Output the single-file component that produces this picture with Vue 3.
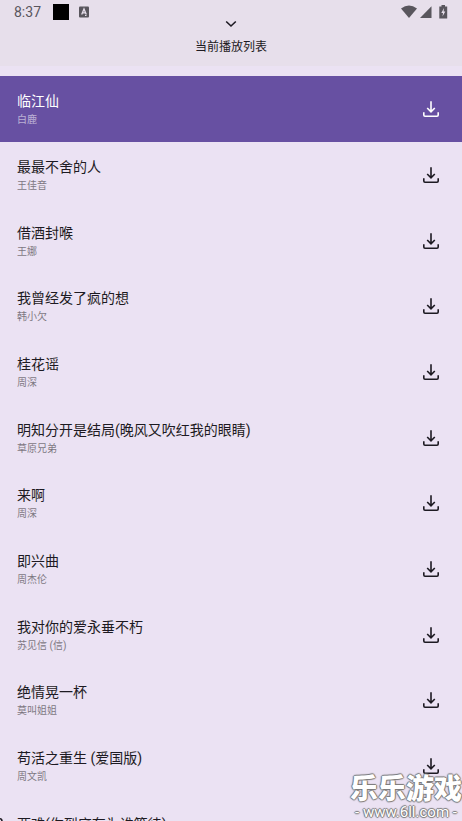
<script setup>
const songs = [
  { title: '临江仙', artist: '白鹿' },
  { title: '最最不舍的人', artist: '王佳音' },
  { title: '借酒封喉', artist: '王娜' },
  { title: '我曾经发了疯的想', artist: '韩小欠' },
  { title: '桂花谣', artist: '周深' },
  { title: '明知分开是结局(晚风又吹红我的眼睛)', artist: '草原兄弟' },
  { title: '来啊', artist: '周深' },
  { title: '即兴曲', artist: '周杰伦' },
  { title: '我对你的爱永垂不朽', artist: '苏见信 (信)' },
  { title: '绝情晃一杯', artist: '莫叫姐姐' },
  { title: '苟活之重生 (爱国版)', artist: '周文凯' },
  { title: '两难(你到底在为谁等待)', artist: '' },
]
</script>

<template>
  <main class="screen">
    <header class="top">
      <div class="status">
        <span class="clock">8:37</span>
        <span class="block"></span>
        <svg class="badge" viewBox="0 0 10 12" aria-hidden="true">
          <rect y="0.500" width="10" height="11" rx="1" fill="#59565d" />
          <path d="M2.700 8.500 5 3l2.300 5.500M3.500 6.800h3" fill="none" stroke="#e7dfeb" stroke-width="1.300" />
          <path d="M6 9.500h1.500" stroke="#e7dfeb" stroke-width="1" />
        </svg>
        <svg class="signals" viewBox="0 0 47 14" aria-hidden="true">
          <path d="M0 3.500Q8-2.500 16 3.500L8 13Z" fill="#59565d" />
          <path d="M19 13 30.500 1.200V13Z" fill="#59565d" />
          <path d="M38.300 1.500H40.500V0H44V1.500H46.200V13.500H38.300Z" fill="#59565d" />
          <path d="M43 3 40.300 8H42L41.500 11.500 44.300 6.500H42.600Z" fill="#e7dfeb" />
        </svg>
      </div>
      <button class="collapse" type="button" aria-label="收起">
        <svg viewBox="0 0 12 8" aria-hidden="true"><path d="M1.200 1.500 6 6l4.800-4.500" /></svg>
      </button>
      <h1>当前播放列表</h1>
    </header>

    <ul class="songs">
      <li v-for="(song, i) in songs" :key="song.title" class="song" :class="{ playing: i === 0 }">
        <div class="info">
          <span class="title">{{ song.title }}</span>
          <span class="artist">{{ song.artist }}</span>
        </div>
        <button class="download" type="button" :aria-label="'下载 ' + song.title">
          <svg viewBox="0 0 18 18" aria-hidden="true">
            <path d="M9 1.200v10.300M5.200 8 9 11.800 12.800 8M1.800 12.200v2.800q0 1.200 1.200 1.200h12q1.200 0 1.200-1.200v-2.800" />
          </svg>
        </button>
      </li>
    </ul>

    <aside class="mark">
      <strong>乐乐游戏</strong>
      <span>- www.6ll.com -</span>
    </aside>
    <svg class="speck" viewBox="0 0 3 3" aria-hidden="true"><path d="M0 .8q1.800 0 2 2.200" /></svg>
  </main>
</template>

<style>
body {
  background: #ebe2f3;
}
</style>

<style scoped>
.screen {
  position: relative;
  height: 100vh;
  overflow: hidden;
  background: #ebe2f3;
  color: #1d1a22;
  font-family: Roboto, "Noto Sans CJK SC", sans-serif;
}

.top {
  display: flex;
  flex-direction: column;
  align-items: center;
  height: 66px;
  margin-bottom: 10px;
  background: #e7dfeb;
}

.status {
  display: flex;
  align-items: center;
  align-self: stretch;
  height: 16px;
  padding: 4px 14px 0;
  color: #59565d;
}

.clock {
  width: 39px;
  font-size: 14px;
  line-height: 18px;
}

.block {
  width: 16px;
  height: 16px;
  margin-right: 10px;
  background: #000;
}

.badge {
  width: 10px;
  height: 12px;
}

.signals {
  width: 47px;
  height: 14px;
  margin-left: auto;
}

button {
  padding: 0;
  border: 0;
  background: none;
  color: inherit;
}

svg {
  display: block;
}

.collapse svg {
  width: 12px;
  height: 8px;
}

.collapse path,
.download path,
.speck path {
  fill: none;
  stroke: currentColor;
  stroke-width: 1.6;
}

h1 {
  margin: 9px 0 0;
  font-size: 12px;
  font-weight: 400;
  line-height: 20px;
}

.songs {
  display: grid;
  grid-template-rows: repeat(12, 1fr);
  height: 788px;
  margin: 0;
  padding: 0;
  list-style: none;
}

.song {
  display: flex;
  align-items: center;
  justify-content: space-between;
  padding: 1px 22px 0 17px;
}

.playing {
  background: #6750a2;
  color: #fff;
}

.info {
  display: flex;
  flex-direction: column;
}

.title {
  font-size: 14px;
  line-height: 22px;
}

.artist {
  min-height: 16px;
  font-size: 10px;
  line-height: 16px;
  opacity: 0.55;
}

.download svg {
  width: 18px;
  height: 18px;
}

.mark {
  position: absolute;
  right: 0;
  bottom: 0;
  display: flex;
  flex-direction: column;
  align-items: center;
  color: #fff;
  text-shadow: 1px 0 1px #777, -1px 0 1px #777, 0 1px 1px #777, 0 -1px 1px #777;
}

.mark strong {
  font-size: 28px;
  font-weight: 900;
  line-height: 28px;
}

.mark span {
  font-size: 15px;
  line-height: 17px;
}

.speck {
  position: absolute;
  left: 0;
  bottom: 0;
  width: 3px;
  height: 3px;
}
</style>
